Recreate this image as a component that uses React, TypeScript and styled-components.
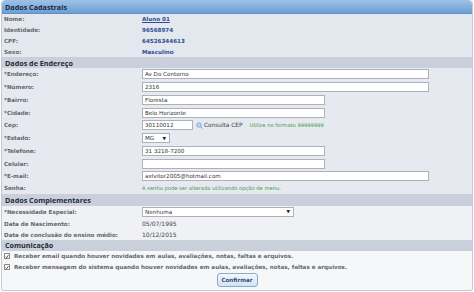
import React from "react";
import styled, { createGlobalStyle } from "styled-components";

const Global = createGlobalStyle`
  html, body { margin: 0; padding: 0; background: #ffffff; }
  body { font-family: "DejaVu Sans", Verdana, sans-serif; }
`;

const Panel = styled.div`
  width: 470px;
  margin-left: 1px;
  border: 1px solid #c4cbd6;
  border-top: none;
  border-radius: 4px 4px 3px 3px;
  background: #f6f7f9;
  overflow: hidden;
`;

const TitleBar = styled.div`
  height: 14px;
  display: flex;
  align-items: center;
  padding-left: 3px;
  border-radius: 4px 4px 0 0;
  background: linear-gradient(#9cc2e8, #6e9ed3);
  border-bottom: 1px solid #5f8fc4;
  box-sizing: border-box;
  font-family: "Open Sans", sans-serif;
  font-weight: 700;
  font-size: 7.2px;
  color: #1b2a3d;
`;

const SectionHeader = styled.div<{ $h: number }>`
  height: ${(p) => p.$h}px;
  display: flex;
  align-items: center;
  padding-left: 3px;
  background: #c9d0db;
  font-family: "Open Sans", sans-serif;
  font-weight: 700;
  font-size: 7.2px;
  color: #1f2a38;
`;

const Section = styled.div<{ $bg: string }>`
  background: ${(p) => p.$bg};
`;

const Row = styled.div<{ $h: number }>`
  height: ${(p) => p.$h}px;
  display: grid;
  grid-template-columns: 140px 1fr;
  align-items: center;
`;

const Label = styled.div`
  padding-left: 2px;
  font-weight: 700;
  font-size: 5.6px;
  color: #63676d;
  white-space: nowrap;
`;

const Value = styled.div`
  font-weight: 700;
  font-size: 5.6px;
  color: #2e4f96;
`;

const LinkValue = styled.a`
  font-weight: 700;
  font-size: 5.6px;
  color: #2e4f96;
  text-decoration: underline;
`;

const PlainValue = styled.div`
  font-size: 6px;
  color: #444;
`;

const Cell = styled.div`
  display: flex;
  align-items: center;
  gap: 3px;
`;

const TextInput = styled.input<{ $w: number }>`
  width: ${(p) => p.$w}px;
  height: 10px;
  box-sizing: border-box;
  margin: 0;
  padding: 0 2px;
  border: 1px solid #adb1b8;
  background: #fff;
  font-family: "DejaVu Sans", Verdana, sans-serif;
  font-size: 5.6px;
  color: #333;
  outline: none;
`;

const SelectBox = styled.div<{ $w: number }>`
  width: ${(p) => p.$w}px;
  height: 10px;
  box-sizing: border-box;
  border: 1px solid #adb1b8;
  background: #fff;
  display: flex;
  align-items: center;
  justify-content: space-between;
  padding: 0 3px 0 2px;
  font-size: 5.6px;
  color: #333;
`;

const Arrow = styled.span`
  font-size: 4.5px;
  color: #222;
`;

const CepLink = styled.span`
  display: flex;
  align-items: center;
  gap: 1px;
  font-size: 5.8px;
  color: #444;
`;

const Hint = styled.span<{ $gap?: number }>`
  font-size: 5.2px;
  color: #3f9a48;
  margin-left: ${(p) => p.$gap ?? 0}px;
`;

const CheckRow = styled.label`
  height: 11px;
  display: flex;
  align-items: center;
  gap: 4px;
  padding-left: 2px;
  font-weight: 700;
  font-size: 5.65px;
  color: #63676d;
`;

const Box = styled.span`
  width: 6px;
  height: 6px;
  box-sizing: border-box;
  border: 1px solid #8a8a8a;
  background: #fff;
  display: flex;
  align-items: center;
  justify-content: center;
`;

const ButtonRow = styled.div`
  height: 17px;
  display: flex;
  justify-content: center;
  align-items: flex-start;
`;

const Button = styled.button`
  width: 41px;
  height: 14px;
  margin: 0;
  padding: 0;
  border: 1px solid #8ea8c8;
  border-radius: 3px;
  background: linear-gradient(#f3f7fc, #d5e2f1);
  font-family: "DejaVu Sans", Verdana, sans-serif;
  font-weight: 700;
  font-size: 5.6px;
  color: #2d4d80;
`;

const Check = () => (
  <Box>
    <svg width="5" height="5" viewBox="0 0 10 10">
      <path d="M1.5 5.5 L4 8 L8.5 1.5" fill="none" stroke="#222" strokeWidth="2" />
    </svg>
  </Box>
);

const Globe = () => (
  <svg width="7" height="7" viewBox="0 0 14 14">
    <circle cx="6" cy="6" r="4.5" fill="#bcd6f0" stroke="#5b8fc9" strokeWidth="1.2" />
    <path d="M9 9 L13 13" stroke="#8a8f96" strokeWidth="2" />
  </svg>
);

const R = 12.75;

export default function App() {
  return (
    <>
      <Global />
      <Panel>
        <TitleBar>Dados Cadastrais</TitleBar>
        <Section $bg="#e3e7ee">
          <Row $h={10}>
            <Label>Nome:</Label>
            <Cell><LinkValue>Aluno 01</LinkValue></Cell>
          </Row>
          <Row $h={11}>
            <Label>Identidade:</Label>
            <Value>96568974</Value>
          </Row>
          <Row $h={11}>
            <Label>CPF:</Label>
            <Value>64526344613</Value>
          </Row>
          <Row $h={11}>
            <Label>Sexo:</Label>
            <Value>Masculino</Value>
          </Row>
        </Section>
        <SectionHeader $h={11}>Dados de Endereço</SectionHeader>
        <Section $bg="#e6e9ef">
          <Row $h={R}>
            <Label>*Endereço:</Label>
            <Cell><TextInput $w={287} readOnly value="Av Do Contorno" /></Cell>
          </Row>
          <Row $h={R}>
            <Label>*Número:</Label>
            <Cell><TextInput $w={287} readOnly value="2316" /></Cell>
          </Row>
          <Row $h={R}>
            <Label>*Bairro:</Label>
            <Cell><TextInput $w={183} readOnly value="Floresta" /></Cell>
          </Row>
          <Row $h={R}>
            <Label>*Cidade:</Label>
            <Cell><TextInput $w={183} readOnly value="Belo Horizonte" /></Cell>
          </Row>
          <Row $h={R}>
            <Label>Cep:</Label>
            <Cell>
              <TextInput $w={51} readOnly value="30110012" />
              <CepLink><Globe />Consulta CEP</CepLink>
              <Hint $gap={4}>Utilize no formato 99999999</Hint>
            </Cell>
          </Row>
          <Row $h={R}>
            <Label>*Estado:</Label>
            <Cell><SelectBox $w={28}>MG<Arrow>▼</Arrow></SelectBox></Cell>
          </Row>
          <Row $h={R}>
            <Label>*Telefone:</Label>
            <Cell><TextInput $w={183} readOnly value="31 3218-7200" /></Cell>
          </Row>
          <Row $h={R}>
            <Label>Celular:</Label>
            <Cell><TextInput $w={183} readOnly value="" /></Cell>
          </Row>
          <Row $h={R}>
            <Label>*E-mail:</Label>
            <Cell><TextInput $w={287} readOnly value="axlvitor2005@hotmail.com" /></Cell>
          </Row>
          <Row $h={11}>
            <Label>Senha:</Label>
            <Cell><Hint>A senha pode ser alterada utilizando opção de menu.</Hint></Cell>
          </Row>
        </Section>
        <SectionHeader $h={12}>Dados Complementares</SectionHeader>
        <Section $bg="#eff1f4">
          <Row $h={12}>
            <Label>*Necessidade Especial:</Label>
            <Cell><SelectBox $w={152}>Nenhuma<Arrow>▼</Arrow></SelectBox></Cell>
          </Row>
          <Row $h={12}>
            <Label>Data de Nascimento:</Label>
            <PlainValue>05/07/1995</PlainValue>
          </Row>
          <Row $h={10}>
            <Label>Data de conclusão do ensino médio:</Label>
            <PlainValue>10/12/2015</PlainValue>
          </Row>
        </Section>
        <SectionHeader $h={11}>Comunicação</SectionHeader>
        <Section $bg="#f6f7f9">
          <CheckRow><Check />Receber email quando houver novidades em aulas, avaliações, notas, faltas e arquivos.</CheckRow>
          <CheckRow><Check />Receber mensagem do sistema quando houver novidades em aulas, avaliações, notas, faltas e arquivos.</CheckRow>
          <ButtonRow><Button>Confirmar</Button></ButtonRow>
        </Section>
      </Panel>
    </>
  );
}
